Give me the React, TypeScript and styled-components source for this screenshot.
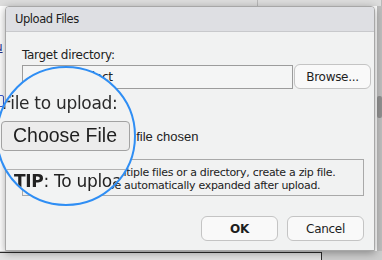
import styled, { createGlobalStyle } from "styled-components";

const GlobalStyle = createGlobalStyle`
  html, body {
    margin: 0;
    padding: 0;
  }
  body {
    width: 382px;
    height: 260px;
    overflow: hidden;
    background: #fff;
    font-family: "DejaVu Sans", "Liberation Sans", sans-serif;
    color: #222;
  }
`;

const Screen = styled.div`
  position: relative;
  width: 382px;
  height: 260px;
  overflow: hidden;
  display: grid;
  grid-template-rows: 6px 1fr 9px;
  background: #fff;
`;

// --- window behind the dialog ---
const TopStrip = styled.div`
  display: flex;
  background: #dddddd;
`;
const StripCell = styled.div<{ $w?: number }>`
  flex: ${p => (p.$w ? "none" : 1)};
  width: ${p => (p.$w ? `${p.$w}px` : "auto")};
  border-right: 1px solid #b9b9b9;
`;
const Middle = styled.div`
  display: grid;
  grid-template-columns: 5px 1fr 5px;
`;
const Gutter = styled.div`
  display: flex;
  flex-direction: column;
  overflow: hidden;
  padding-top: 34px;
`;
const CutLink = styled.span`
  margin-left: -5px;
  font-size: 12px;
  line-height: 14px;
  color: #1d3591;
  text-decoration: underline;
`;
const CutBox = styled.span`
  margin: 41px 0 0 -6px;
  width: 8px;
  height: 10px;
  border: 1px solid #3a5ad3;
  border-radius: 2px;
`;
const Rail = styled.div`
  display: flex;
  flex-direction: column;
  background: #bdbdbd;
  padding-top: 90px;
`;
const Thumb = styled.div`
  height: 22px;
  background: #8f8f8f;
  border-radius: 2px;
`;
const BottomBar = styled.div`
  display: flex;
  align-items: flex-start;
  background: #cdcdcd;
`;
const Panel = styled.div`
  width: 321px;
  height: 8px;
  margin-top: 1px;
  border-top: 1px solid #2c2c2c;
  border-right: 1px solid #2c2c2c;
  background: #e3e3e3;
`;

// --- dialog ---
const Dialog = styled.div`
  position: absolute;
  left: 5px;
  top: 6px;
  width: 370px;
  height: 245px;
  box-sizing: border-box;
  display: flex;
  flex-direction: column;
  border: 1px solid #a7a7a7;
  border-radius: 4px 4px 0 0;
  background: #f1f2f2;
  box-shadow: 0 2px 9px rgba(0, 0, 0, 0.35);
`;
const TitleBar = styled.div`
  flex: none;
  height: 24px;
  display: flex;
  align-items: center;
  padding-left: 9px;
  background: #dedfe3;
  border-bottom: 1px solid #c8c9cc;
  border-radius: 3px 3px 0 0;
  font-size: 11.5px;
  letter-spacing: -0.45px;
  color: #1c1c1c;
`;
const Body = styled.div`
  display: flex;
  flex-direction: column;
  padding: 16px 10px 0 16px;
`;
const Label = styled.div<{ $gap?: number }>`
  margin-top: ${p => p.$gap || 0}px;
  font-size: 12px;
  line-height: 15px;
  letter-spacing: -0.3px;
  color: #222;
`;
const InputRow = styled.div`
  display: flex;
  align-items: flex-end;
  gap: 1px;
  height: 25px;
  margin: 1px -7px 0 0;
`;
const PathField = styled.div`
  flex: 1;
  height: 24px;
  box-sizing: border-box;
  display: flex;
  align-items: center;
  padding-left: 5px;
  border: 1px solid #9c9c9c;
  background: #f4f5f5;
  font-size: 12px;
  letter-spacing: -0.3px;
  color: #222;
  white-space: nowrap;
  overflow: hidden;
`;
const PushButton = styled.div<{ $bold?: boolean }>`
  flex: none;
  width: 77px;
  height: 25px;
  box-sizing: border-box;
  display: flex;
  align-items: center;
  justify-content: center;
  border: 1px solid #c4c4c4;
  border-radius: 6px;
  background: #f9f9f9;
  font-size: 12px;
  letter-spacing: -0.3px;
  font-weight: ${p => (p.$bold ? 700 : 400)};
  color: #1e1e1e;
`;
const FileRow = styled.div`
  display: flex;
  align-items: center;
  gap: 8px;
  margin-top: 6px;
`;
const FileButton = styled.div`
  width: 86px;
  height: 20px;
  box-sizing: border-box;
  display: flex;
  align-items: center;
  justify-content: center;
  border: 1px solid #a0a0a0;
  border-radius: 3px;
  background: #ececec;
  font-family: "Liberation Sans", Arial, sans-serif;
  font-size: 13px;
`;
const FileStatus = styled.span`
  font-family: "Liberation Sans", Arial, sans-serif;
  font-size: 13px;
  color: #222;
`;
const InfoBox = styled.div`
  margin-top: 13px;
  padding: 6px 5px 3px;
  border: 1px solid #a9a9a9;
  font-size: 11px;
  line-height: 13px;
  letter-spacing: -0.3px;
  color: #222;
`;
const Actions = styled.div`
  display: flex;
  justify-content: flex-end;
  gap: 9px;
  margin-top: 20px;
`;

// --- magnifier over the file picker ---
const Lens = styled.div`
  position: absolute;
  left: -4px;
  top: 65.5px;
  width: 140px;
  height: 140px;
  box-sizing: border-box;
  border: 2.5px solid #2f8ef4;
  border-radius: 50%;
  overflow: hidden;
  background: #f2f3f3;
`;
const ZoomView = styled.div`
  display: flex;
  flex-direction: column;
  padding-top: 24px;
  filter: blur(0.3px);
`;
const ZoomLabel = styled.div`
  margin-left: 4px;
  font-size: 17px;
  line-height: 22px;
  letter-spacing: -0.3px;
  color: #2a2a2a;
  white-space: nowrap;
`;
const ZoomButton = styled.div`
  align-self: flex-start;
  width: 129px;
  height: 30px;
  margin: 7px 0 0 2.5px;
  box-sizing: border-box;
  display: flex;
  align-items: center;
  justify-content: center;
  border: 1.5px solid #a2a2a2;
  border-radius: 4px;
  background: #ececec;
  font-family: "Liberation Sans", Arial, sans-serif;
  font-size: 19.5px;
  color: #1f1f1f;
`;
const ZoomTip = styled.div`
  margin-top: 18px;
  padding: 1px 0 0 16px;
  border-top: 1.5px solid #b3b3b3;
  font-size: 17px;
  line-height: 20px;
  letter-spacing: -0.3px;
  color: #222;
  white-space: nowrap;
`;

export default function App() {
  return (
    <>
      <GlobalStyle />
      <Screen>
        <TopStrip>
          <StripCell $w={257} />
          <StripCell />
        </TopStrip>
        <Middle>
          <Gutter>
            <CutLink>u</CutLink>
            <CutBox />
          </Gutter>
          <div />
          <Rail>
            <Thumb />
          </Rail>
        </Middle>
        <BottomBar>
          <Panel />
        </BottomBar>

        <Dialog>
          <TitleBar>Upload Files</TitleBar>
          <Body>
            <Label>Target directory:</Label>
            <InputRow>
              <PathField>~/work/project</PathField>
              <PushButton>Browse...</PushButton>
            </InputRow>
            <Label $gap={16}>File to upload:</Label>
            <FileRow>
              <FileButton>Choose File</FileButton>
              <FileStatus>No file chosen</FileStatus>
            </FileRow>
            <InfoBox>
              <b>TIP</b>: To upload multiple files or a directory, create a zip file.
              The zip file will be automatically expanded after upload.
            </InfoBox>
            <Actions>
              <PushButton $bold>OK</PushButton>
              <PushButton>Cancel</PushButton>
            </Actions>
          </Body>
        </Dialog>

        <Lens>
          <ZoomView>
            <ZoomLabel>File to upload:</ZoomLabel>
            <ZoomButton>Choose File</ZoomButton>
            <ZoomTip>
              <b>TIP</b>: To upload multiple
            </ZoomTip>
          </ZoomView>
        </Lens>
      </Screen>
    </>
  );
}
